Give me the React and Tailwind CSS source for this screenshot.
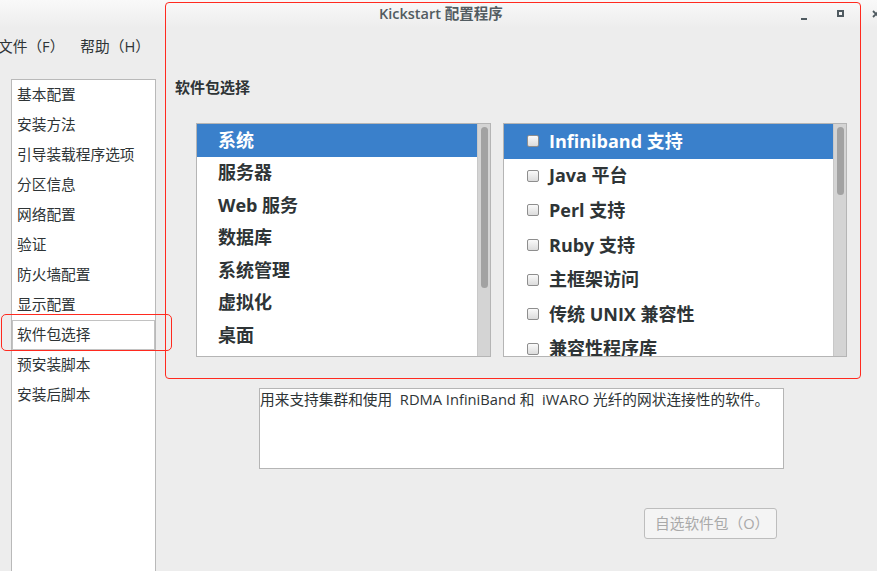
import React from 'react';

const sidebarItems = [
  '基本配置',
  '安装方法',
  '引导装载程序选项',
  '分区信息',
  '网络配置',
  '验证',
  '防火墙配置',
  '显示配置',
  '软件包选择',
  '预安装脚本',
  '安装后脚本',
];

const groups = ['系统', '服务器', 'Web 服务', '数据库', '系统管理', '虚拟化', '桌面'];

const packages = [
  'Infiniband 支持',
  'Java 平台',
  'Perl 支持',
  'Ruby 支持',
  '主框架访问',
  '传统 UNIX 兼容性',
  '兼容性程序库',
];

const Scrollbar = ({ thumb }) => (
  <div className="w-[13px] h-full bg-[#d4d4d4] border-l border-[#c8c8c8] flex justify-center shrink-0">
    <div className={`w-[7px] mt-[3px] rounded-full bg-[#a2a2a2] ${thumb}`} />
  </div>
);

const Checkbox = () => (
  <div className="w-[12px] h-[12px] rounded-[2px] border border-[#8e8e8e] bg-gradient-to-b from-[#fafafa] to-[#dcdcdc] shrink-0" />
);

export default function App() {
  return (
    <div
      className="relative w-[877px] h-[571px] overflow-hidden bg-[#ededed] text-[#2e3436]"
      style={{ fontFamily: '"Open Sans", "Noto Sans CJK SC", sans-serif' }}
    >
      {/* title bar */}
      <div className="h-[28px] flex items-center bg-gradient-to-b from-[#f9f9f9] to-[#ededed]">
        <div className="pl-[379px] text-[14.5px] font-semibold text-[#525c61] leading-none">
          Kickstart 配置程序
        </div>
        <div className="ml-auto flex items-center">
          <div className="w-[6px] h-[2px] bg-[#4f5a60] mt-[9px]" />
          <div className="w-[7px] h-[7px] border-2 border-[#4f5a60] ml-[30px] mt-[-1px]" />
          <div className="ml-[28px] w-[5px] h-[8px] overflow-hidden mt-[-1px] shrink-0">
            <svg width="8" height="8" viewBox="0 0 8 8">
              <path d="M1 1 L7 7 M7 1 L1 7" stroke="#4f5a60" strokeWidth="1.8" />
            </svg>
          </div>
        </div>
      </div>

      {/* menu bar */}
      <div className="h-[36px] flex items-center text-[14.7px] leading-none ml-[-2px]">
        <span>文件（F）</span>
        <span className="ml-[16px]">帮助（H）</span>
      </div>

      <div className="flex items-start">
        {/* sidebar */}
        <div className="ml-[11px] mt-[15px] w-[145px] h-[500px] bg-white border border-[#b9b9b9] shrink-0">
          {sidebarItems.map((item, i) => (
            <div
              key={item}
              className={`h-[30px] flex items-center pl-[4px] pb-[2px] text-[14.7px] border ${
                i === 8 ? 'border-[#c2c2c2]' : 'border-transparent'
              }`}
            >
              {item}
            </div>
          ))}
        </div>

        {/* main panel */}
        <div className="ml-[19px] flex flex-col">
          <div className="mt-[13px] h-[20px] flex items-center text-[15px] font-bold text-[#2e3436]">
            软件包选择
          </div>

          <div className="mt-[26px] ml-[21px] flex gap-[12px]">
            <div className="w-[295px] h-[234px] bg-white border border-[#b5b5b5] flex">
              <div className="flex-1">
                {groups.map((g, i) => (
                  <div
                    key={g}
                    className={`h-[32.5px] flex items-center pl-[21px] text-[18px] font-bold ${
                      i === 0 ? 'bg-[#3a80cb] text-white' : 'text-[#2e3436]'
                    }`}
                  >
                    {g}
                  </div>
                ))}
              </div>
              <Scrollbar thumb="h-[161px]" />
            </div>

            <div className="w-[344px] h-[234px] bg-white border border-[#b5b5b5] flex">
              <div className="flex-1 overflow-hidden">
                {packages.map((p, i) => (
                  <div
                    key={p}
                    className={`h-[34.6px] flex items-center pl-[23px] gap-[10px] text-[18px] font-bold ${
                      i === 0 ? 'bg-[#3a80cb] text-white' : 'text-[#2e3436]'
                    }`}
                  >
                    <Checkbox />
                    <span>{p}</span>
                  </div>
                ))}
              </div>
              <Scrollbar thumb="h-[68px]" />
            </div>
          </div>

          {/* description */}
          <div className="mt-[31px] ml-[84px] w-[525px] h-[81px] bg-white border border-[#b5b5b5] text-[14.7px] whitespace-pre leading-[20px] text-[#2e3436]">
            用来支持集群和使用  RDMA InfiniBand 和  iWARO 光纤的网状连接性的软件。
          </div>

          <div className="mt-[39px] ml-[469px] w-[133px] h-[31px] rounded-[3px] border border-[#bdbdbd] bg-[#f4f4f4] flex items-center pl-[10px] text-[14.7px] text-[#a9a9a9]">
            自选软件包（O）
          </div>
        </div>
      </div>

      {/* red annotation outlines */}
      <div className="absolute left-[165px] top-[2px] w-[696px] h-[377px] border border-[#ff2a1f] rounded-[4px]" />
      <div className="absolute left-[1px] top-[314px] w-[171px] h-[37px] border border-[#ff2a1f] rounded-[5px]" />
    </div>
  );
}
